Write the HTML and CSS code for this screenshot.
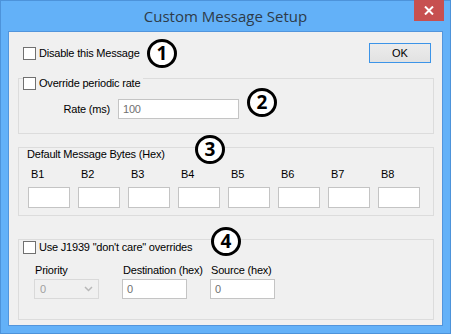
FILE: index.html
```html
<!DOCTYPE html>
<html lang="en">
<head>
  <meta charset="UTF-8">
  <title>Custom Message Setup</title>
  <link rel="stylesheet" href="styles.css">
</head>
<body>

  <div class="window">
    <div class="titlebar">
      <span class="title">Custom Message Setup</span>
      <div class="close-btn">
        <svg width="10" height="9" viewBox="0 0 10 9"><path d="M1 0.5 L9 8.5 M9 0.5 L1 8.5" stroke="#fff" stroke-width="2"/></svg>
      </div>
    </div>

    <div class="client">
      <div class="top-row">
        <label class="check"><span class="box"></span>Disable this Message</label>
        <button class="ok-btn">OK</button>
      </div>

      <div class="group group-rate">
        <label class="check group-head"><span class="box"></span>Override periodic rate</label>
        <div class="rate-row">
          <span class="rate-label">Rate (ms)</span>
          <div class="textbox rate-box">100</div>
        </div>
      </div>

      <div class="group group-bytes">
        <div class="group-head head-text">Default Message Bytes (Hex)</div>
        <div class="bytes">
          <div class="byte"><span>B1</span><div class="textbox"></div></div>
          <div class="byte"><span>B2</span><div class="textbox"></div></div>
          <div class="byte"><span>B3</span><div class="textbox"></div></div>
          <div class="byte"><span>B4</span><div class="textbox"></div></div>
          <div class="byte"><span>B5</span><div class="textbox"></div></div>
          <div class="byte"><span>B6</span><div class="textbox"></div></div>
          <div class="byte"><span>B7</span><div class="textbox"></div></div>
          <div class="byte"><span>B8</span><div class="textbox"></div></div>
        </div>
      </div>

      <div class="group group-j1939">
        <label class="check group-head"><span class="box"></span>Use J1939 "don't care" overrides</label>
        <div class="j-fields">
          <div class="j-field">
            <span>Priority</span>
            <div class="combo">0
              <svg width="9" height="6" viewBox="0 0 9 6"><path d="M1 1 L4.5 4.5 L8 1" fill="none" stroke="#b8b8b8" stroke-width="1.5"/></svg>
            </div>
          </div>
          <div class="j-field">
            <span>Destination (hex)</span>
            <div class="textbox">0</div>
          </div>
          <div class="j-field">
            <span>Source (hex)</span>
            <div class="textbox">0</div>
          </div>
        </div>
      </div>
    </div>

    <!-- callout markers -->
    <div class="marker" style="left:146px; top:38px;">1</div>
    <div class="marker" style="left:246px; top:87px;">2</div>
    <div class="marker" style="left:194px; top:134px;">3</div>
    <div class="marker" style="left:210px; top:226px;">4</div>
  </div>

</body>
</html>
```

FILE: styles.css
```css
body {
  margin: 0;
  font-family: 'Liberation Sans', Arial, sans-serif;
  font-size: 11px;
  letter-spacing: -0.2px;
  color: #000;
}

.window {
  position: relative;
  width: 451px;
  height: 334px;
  box-sizing: border-box;
  border: 1px solid #4d93da;
  background: #63b1f8;
  display: flex;
  flex-direction: column;
}

.titlebar {
  height: 30px;
  display: flex;
  justify-content: center;
  align-items: center;
  position: relative;
}

.title {
  font-family: 'Open Sans', 'Noto Sans', sans-serif;
  font-size: 15px;
  letter-spacing: 0;
  color: #2e3b48;
  margin-top: -1px;
}

.close-btn {
  position: absolute;
  right: 6px;
  top: -1px;
  width: 30px;
  height: 21px;
  background: #c75050;
  display: flex;
  justify-content: center;
  align-items: center;
}

.client {
  flex: 1;
  margin: 0 7px 7px;
  border: 1px solid #5295dc;
  background: #f0f0f0;
  padding: 11px 8px 0 9px;
}

.top-row {
  display: flex;
  justify-content: space-between;
  align-items: center;
  padding: 0 3px 0 5px;
  height: 20px;
}

.check {
  display: flex;
  align-items: center;
  gap: 3px;
  line-height: 13px;
}

.box {
  width: 11px;
  height: 11px;
  border: 1px solid #707070;
  background: #fff;
}

.ok-btn {
  width: 62px;
  height: 20px;
  border: 1px solid #3c94e8;
  background: linear-gradient(#ececec, #e2e2e2);
  font-family: 'Liberation Sans', Arial, sans-serif;
  font-size: 11px;
  color: #000;
  padding: 0;
}

.group {
  border: 1px solid #dcdcdc;
}

.group-head {
  display: inline-flex;
  background: #f0f0f0;
  padding-right: 3px;
}

.group-rate {
  margin-top: 15px;
  height: 54px;
}

.group-rate .group-head {
  margin: -2px 0 0 4px;
}

.rate-row {
  display: flex;
  align-items: center;
  margin-top: 7px;
  padding-left: 26px;
  gap: 8px;
}

.rate-label {
  width: 65px;
  text-align: right;
}

.textbox {
  box-sizing: border-box;
  height: 20px;
  border: 1px solid #c4c4c4;
  background: #fff;
  padding: 0 4px;
  line-height: 18px;
  color: #707070;
}

.rate-box {
  width: 121px;
}

.group-bytes {
  margin-top: 13px;
  height: 67px;
}

.head-text {
  margin: -7px 0 0 7px;
  padding: 0 2px 0 1px;
  line-height: 13px;
}

.bytes {
  display: grid;
  grid-template-columns: repeat(8, 42px);
  column-gap: 8px;
  padding-left: 9px;
  margin-top: 7px;
}

.byte span {
  display: block;
  padding-left: 3px;
  line-height: 13px;
}

.byte .textbox {
  margin-top: 6px;
  height: 21px;
}

.group-j1939 {
  margin-top: 23px;
  height: 79px;
}

.group-j1939 .group-head {
  margin: 1px 0 0 4px;
}

.j-fields {
  display: flex;
  gap: 23px;
  padding-left: 15px;
  margin-top: 8px;
}

.j-field {
  width: 65px;
  display: flex;
  flex-direction: column;
}

.j-field span {
  padding-left: 1px;
  line-height: 13px;
  white-space: nowrap;
}

.j-field .textbox,
.combo {
  margin-top: 2px;
}

.combo {
  box-sizing: border-box;
  height: 20px;
  border: 1px solid #d9d9d9;
  background: #f0f0f0;
  color: #a0a0a0;
  padding: 0 5px;
  line-height: 18px;
  display: flex;
  justify-content: space-between;
  align-items: center;
}

.marker {
  position: absolute;
  width: 30px;
  height: 29px;
  box-sizing: border-box;
  border: 3px solid #000;
  border-radius: 50%;
  background: #fff;
  font-family: 'Open Sans', 'Noto Sans', sans-serif;
  font-weight: bold;
  font-size: 19px;
  letter-spacing: 0;
  line-height: 23px;
  text-align: center;
}
```
